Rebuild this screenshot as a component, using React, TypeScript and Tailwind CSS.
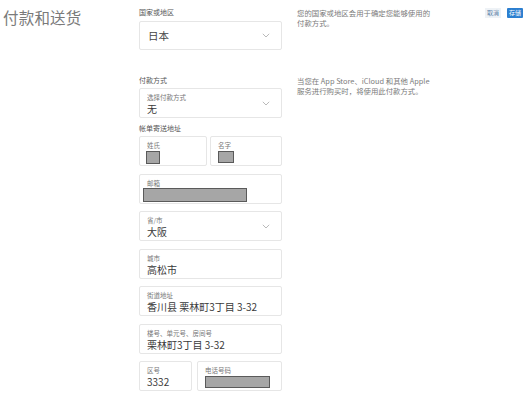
import React from 'react';

const font = { fontFamily: '"Noto Sans CJK SC", "Noto Sans", sans-serif' };

const Chevron: React.FC = () => (
  <svg width="8" height="5" viewBox="0 0 8 5" className="text-[#a8a8a8]">
    <path d="M0.8 0.8 L4 4 L7.2 0.8" fill="none" stroke="currentColor" strokeWidth="0.8" />
  </svg>
);

const Redacted: React.FC<{ className: string }> = ({ className }) => (
  <div className={`bg-[#a6a6a6] border border-[#5a5a5a] ${className}`} />
);

interface FieldProps {
  label: string;
  value?: string;
  select?: boolean;
  children?: React.ReactNode;
  className?: string;
}

const Field: React.FC<FieldProps> = ({ label, value, select, children, className = '' }) => (
  <div className={`h-[30px] border border-[#e6e6e6] rounded-[2px] bg-white flex items-start pl-[7px] pr-[11px] ${className}`}>
    <div className="flex-1 min-w-0 flex flex-col pt-[4px]">
      <div className="text-[6.5px] leading-[8px] text-[#777]">{label}</div>
      {value && <div className="text-[10px] leading-[11px] text-[#3a3a3a] mt-[2px] whitespace-nowrap">{value}</div>}
      {children}
    </div>
    {select && <div className="self-center"><Chevron /></div>}
  </div>
);

export default function App() {
  return (
    <div className="w-[532px] h-[395px] bg-white overflow-hidden relative" style={font}>
      <div className="flex">
        <div className="w-[139px] pl-[3px] pt-[7px] text-[15.5px] leading-[20px] text-[#7a7a7a] tracking-[0.2px]">
          付款和送货
        </div>

        <div className="w-[143px] pt-[8px] flex flex-col">
          <div className="text-[7px] leading-[9px] text-[#555]">国家或地区</div>
          <div className="mt-[4px] h-[29px] border border-[#e6e6e6] rounded-[2px] flex items-center pl-[8px] pr-[11px]">
            <span className="flex-1 text-[10.5px] text-[#444]">日本</span>
            <Chevron />
          </div>

          <div className="mt-[26px] text-[7px] leading-[9px] text-[#555]">付款方式</div>
          <Field label="选择付款方式" value="无" select className="mt-[3px]" />

          <div className="mt-[6px] text-[7px] leading-[9px] text-[#555]">帐单寄送地址</div>
          <div className="mt-[3px] flex flex-col gap-[7.5px]">
            <div className="flex gap-[3px]">
              <Field label="姓氏" className="w-[68px]">
                <Redacted className="mt-[2px] w-[14px] h-[13px] -ml-[1px]" />
              </Field>
              <Field label="名字" className="flex-1">
                <Redacted className="mt-[2px] w-[16px] h-[12px]" />
              </Field>
            </div>
            <Field label="邮箱">
              <Redacted className="mt-[1px] w-[104px] h-[14px] -ml-[4px]" />
            </Field>
            <Field label="省/市" value="大阪" select />
            <Field label="城市" value="高松市" />
            <Field label="街道地址" value="香川县 栗林町3丁目 3-32" />
            <Field label="楼号、单元号、房间号" value="栗林町3丁目 3-32" />
            <div className="flex gap-[5px]">
              <Field label="区号" value="3332" className="w-[55px]" />
              <Field label="电话号码" className="flex-1">
                <Redacted className="mt-[2px] w-[65px] h-[12px]" />
              </Field>
            </div>
          </div>
        </div>

        <div className="flex-1 pl-[15px] pt-[8px] text-[7.4px] leading-[9.5px] text-[#7a7a7a]">
          <p>您的国家或地区会用于确定您能够使用的<br />付款方式。</p>
          <p className="mt-[49px]">当您在 App Store、iCloud 和其他 Apple<br />服务进行购买时，将使用此付款方式。</p>
        </div>

        <div className="pt-[8px] pr-[9px] flex items-start gap-[6px]">
          <span className="px-[2px] h-[10px] leading-[10px] text-[6px] bg-[#eef2f6] text-[#5a7fa6]">取消</span>
          <span className="px-[2px] h-[10px] leading-[10px] text-[6px] bg-[#2c7fd0] text-white rounded-[1px]">存储</span>
        </div>
      </div>
    </div>
  );
}
